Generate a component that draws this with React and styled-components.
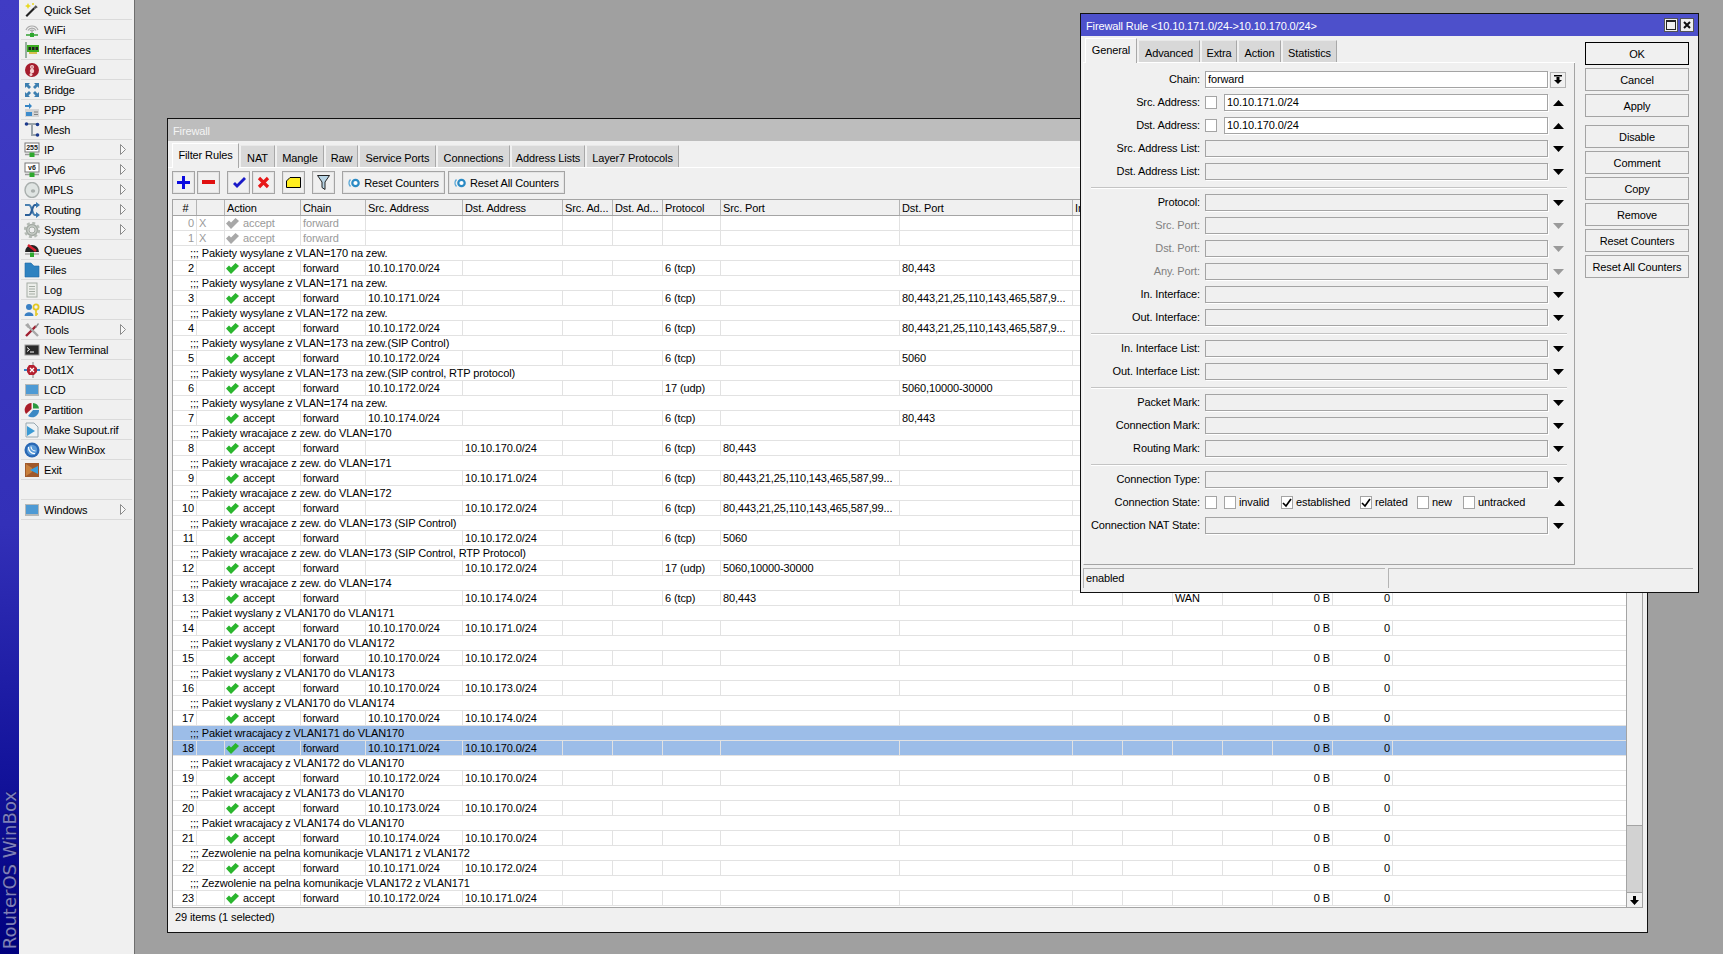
import React from "react";
import styled, { createGlobalStyle } from "styled-components";

const Global = createGlobalStyle`
  html, body {
    margin: 0;
    padding: 0;
    overflow: hidden;
    background: #a0a0a0;
  }
  * {
    box-sizing: border-box;
  }
  body {
    font-family: "Liberation Sans", Arial, sans-serif;
    font-size: 11px;
    letter-spacing: -0.12px;
    color: #000;
  }
`;

const Desktop = styled.div`
  display: flex;
  width: 1723px;
  height: 954px;
  overflow: hidden;
`;

const Strip = styled.div`
  width: 19px;
  flex: none;
  display: flex;
  flex-direction: column;
  justify-content: flex-end;
  align-items: center;
  padding-bottom: 5px;
  background: linear-gradient(180deg, #403cc4 0%, #3330b8 55%, #14149c 80%, #00007e 100%);
`;

const StripText = styled.div`
  writing-mode: vertical-rl;
  transform: rotate(180deg);
  font-family: "DejaVu Sans", sans-serif;
  font-size: 18px;
  letter-spacing: 0;
  line-height: 19px;
  color: #7f80b8;
  text-shadow: 1px 1px 1px #10106a;
  white-space: nowrap;
`;

const Menu = styled.nav`
  width: 116px;
  flex: none;
  background: #f0f0f0;
  border-right: 1px solid #6e6e6e;
`;

const MenuRow = styled.div`
  position: relative;
  height: 20px;
  display: flex;
  align-items: center;
  gap: 4px;
  margin: 0 2px;
  padding: 0 3px;
  border-bottom: 1px solid #dadada;
  font-size: 11px;
  letter-spacing: -0.18px;
  white-space: nowrap;
`;

const MenuIcon = styled.svg`
  width: 16px;
  height: 16px;
  flex: none;
`;

const SubArrow = styled.svg`
  width: 6px;
  height: 11px;
  margin-left: auto;
  margin-right: 3px;
  flex: none;
`;

const Workspace = styled.main`
  position: relative;
  flex: 1;
  background: #a0a0a0;
`;

const Window = styled.section`
  position: absolute;
  left: ${(p) => p.$x}px;
  top: ${(p) => p.$y}px;
  width: ${(p) => p.$w}px;
  height: ${(p) => p.$h}px;
  display: flex;
  flex-direction: column;
  background: #f0f0f0;
  border: 1px solid #111;
  overflow: hidden;
`;

const TitleBar = styled.header`
  height: 22px;
  flex: none;
  display: flex;
  align-items: center;
  padding: 2px 4px 0 5px;
  background: ${(p) => (p.$active ? "#4d50cb" : "#bdbdbd")};
  color: ${(p) => (p.$active ? "#fff" : "#f4f4f4")};
  font-size: 11px;
`;

const TitleButtons = styled.div`
  display: flex;
  gap: 2px;
  margin-left: auto;
  margin-top: -2px;
`;

const TitleBtn = styled.div`
  width: 14px;
  height: 14px;
  display: flex;
  align-items: center;
  justify-content: center;
  background: #f0f0f0;
  border: 1px solid #555;
`;

const Tabs = styled.div`
  height: 27px;
  flex: none;
  display: flex;
  align-items: flex-end;
  gap: 1px;
  padding-left: ${(p) => p.$pad}px;
  border-bottom: 1px solid #fff;
`;

const Tab = styled.div`
  height: ${(p) => (p.$active ? 25 : 22)}px;
  width: ${(p) => p.$w}px;
  flex: none;
  display: flex;
  align-items: center;
  justify-content: center;
  padding-top: ${(p) => (p.$active ? 0 : 2)}px;
  padding-bottom: ${(p) => (p.$active ? 2 : 0)}px;
  background: ${(p) => (p.$active ? "#f0f0f0" : "#d8d8d8")};
  border-top: 1px solid ${(p) => (p.$active ? "#fff" : "#e8e8e8")};
  border-left: 1px solid ${(p) => (p.$active ? "#fff" : "#f0f0f0")};
  border-right: 1px solid #a8a8a8;
  margin-bottom: ${(p) => (p.$active ? -1 : 0)}px;
  white-space: nowrap;
`;

const Toolbar = styled.div`
  height: 31px;
  flex: none;
  display: flex;
  align-items: flex-start;
  padding: 3px 0 0 4px;
`;

const ToolBtn = styled.button`
  height: 23px;
  width: ${(p) => p.$w || 23}px;
  margin-left: ${(p) => p.$gap || 0}px;
  flex: none;
  display: flex;
  align-items: center;
  justify-content: center;
  gap: 4px;
  padding: 0;
  background: #f0f0f0;
  border: 1px solid #a4a4a4;
  outline: 1px solid #e4e4e4;
  outline-offset: -2px;
  font: inherit;
  letter-spacing: inherit;
  color: #000;
`;

const Table = styled.div`
  margin: 0 4px;
  flex: 1;
  display: flex;
  min-height: 0;
  border-right: 1px solid #a4a4a4;
  border-bottom: 1px solid #a4a4a4;
  border-left: 1px solid #a4a4a4;
`;

const TableBody = styled.div`
  flex: 1;
  min-width: 0;
  background: #fff;
  overflow: hidden;
`;

const columns = "24px 28px 76px 65px 97px 100px 50px 50px 58px 179px 173px 50px 50px 50px 50px 60px 60px 1fr";

const HeaderRow = styled.div`
  display: grid;
  grid-template-columns: ${columns};
  height: 17px;
  background: #f0f0f0;
  border-top: 1px solid #a4a4a4;
  border-bottom: 1px solid #a4a4a4;
`;

const HeadCell = styled.div`
  padding-left: 2px;
  line-height: 16px;
  border-right: 1px solid #b4b4b4;
  text-align: ${(p) => (p.$center ? "center" : "left")};
  white-space: nowrap;
  overflow: hidden;
`;

const RuleRow = styled.div`
  display: grid;
  grid-template-columns: ${columns};
  height: 15px;
  line-height: 14px;
  border-bottom: 1px solid #e2e2e2;
  background: ${(p) => (p.$selected ? "#9cbde8" : "#fff")};
  color: ${(p) => (p.$disabled ? "#9a9a9a" : "#000")};
`;

const Cell = styled.div`
  display: flex;
  align-items: center;
  justify-content: ${(p) => (p.$right ? "flex-end" : "flex-start")};
  gap: 4px;
  padding: ${(p) => (p.$right ? "0 2px 0 0" : "0 0 0 2px")};
  border-right: 1px solid #e2e2e2;
  white-space: nowrap;
  overflow: hidden;
`;

const ActionCell = styled(Cell)`
  padding-left: 1px;
`;

const CommentRow = styled.div`
  height: 15px;
  line-height: 14px;
  padding-left: 17px;
  border-bottom: 1px solid #e2e2e2;
  background: ${(p) => (p.$selected ? "#9cbde8" : "#fff")};
  white-space: nowrap;
`;

const Scrollbar = styled.div`
  width: 16px;
  flex: none;
  display: flex;
  flex-direction: column;
  border-left: 1px solid #a4a4a4;
  background: #d2d2d2;
`;

const ScrollThumb = styled.div`
  height: 627px;
  flex: none;
  background: #f0f0f0;
  border-bottom: 1px solid #a4a4a4;
`;

const ScrollArrow = styled.div`
  height: 15px;
  margin-top: auto;
  display: flex;
  align-items: center;
  justify-content: center;
  background: #f0f0f0;
  border-top: 1px solid #a4a4a4;
`;

const StatusBar = styled.footer`
  height: 24px;
  flex: none;
  display: flex;
  align-items: center;
  padding: 0 0 6px 7px;
`;

const DialogBody = styled.div`
  flex: 1;
  display: flex;
  min-height: 0;
`;

const DialogLeft = styled.div`
  width: 492px;
  margin-left: 2px;
  flex: none;
  display: flex;
  flex-direction: column;
`;

const FormPanel = styled.div`
  height: 502px;
  flex: none;
  padding-top: 8px;
  border-right: 1px solid #a4a4a4;
  border-bottom: 1px solid #a4a4a4;
  border-left: 1px solid #f8f8f8;
`;

const FieldRow = styled.div`
  height: 23px;
  display: flex;
  align-items: flex-start;
  color: ${(p) => (p.$dim ? "#808080" : "#000")};
`;

const Label = styled.div`
  width: 121px;
  flex: none;
  padding-right: 5px;
  line-height: 17px;
  text-align: right;
  white-space: nowrap;
`;

const Field = styled.div`
  flex: 1;
  height: 17px;
  min-width: 0;
  margin-left: ${(p) => p.$gap || 0}px;
  padding-left: 2px;
  line-height: 15px;
  color: #000;
  background: ${(p) => (p.$white ? "#fff" : "#f0f0f0")};
  border: 1px solid #a4a4a4;
  box-shadow: 1px 1px 0 #fff;
`;

const FieldEnd = styled.div`
  width: 26px;
  height: 17px;
  flex: none;
  display: flex;
  align-items: center;
  justify-content: center;
  padding-right: 6px;
`;

const ChainBtn = styled.div`
  width: 16px;
  height: 16px;
  display: flex;
  align-items: center;
  justify-content: center;
  background: #f0f0f0;
  border: 1px solid #b4b4b4;
`;

const Separator = styled.div`
  height: 1px;
  margin: 1px 0 6px 7px;
  width: 476px;
  background: #c4c4c4;
  box-shadow: 0 1px 0 #fff;
`;

const Check = styled.div`
  width: 12px;
  height: 13px;
  flex: none;
  margin-top: 2px;
  margin-left: ${(p) => p.$gap || 0}px;
  display: flex;
  align-items: center;
  justify-content: center;
  background: #fff;
  border: 1px solid #a4a4a4;
`;

const CheckLabel = styled.div`
  flex: none;
  width: ${(p) => p.$w}px;
  padding-left: 3px;
  line-height: 17px;
  color: #000;
`;

const DialogStatus = styled.div`
  display: flex;
  gap: 3px;
  height: 20px;
  margin-top: 3px;
  width: 610px;
`;

const StatusCell = styled.div`
  width: ${(p) => p.$w}px;
  padding-left: 2px;
  line-height: 19px;
  border-top: 1px solid #b4b4b4;
  border-left: 1px solid #b4b4b4;
`;

const ButtonColumn = styled.div`
  width: 104px;
  margin-left: 10px;
  padding-top: 6px;
  flex: none;
  display: flex;
  flex-direction: column;
`;

const DialogBtn = styled.button`
  height: 23px;
  margin-bottom: ${(p) => p.$after || 3}px;
  padding: 0;
  flex: none;
  background: #f0f0f0;
  border: 1px solid ${(p) => (p.$primary ? "#000" : "#a4a4a4")};
  font: inherit;
  letter-spacing: inherit;
  color: #000;
`;

const icons = {
  quick: (
    <>
      <path d="M3 15 L1.5 13.5 L9.5 5.5 L11 7 Z" fill="#222" />
      <path d="M9.5 5.5 L12 3 L14 5 L11 7 Z" fill="#555" />
      <path d="M12.5 2.5 L14 4.5" stroke="#eee" strokeWidth="1.5" />
      <path d="M4 1 L5 3 L7 4 L5 5 L4 7 L3 5 L1 4 L3 3 Z" fill="#e8d820" />
      <circle cx="9" cy="2" r="1" fill="#e8d820" />
    </>
  ),
  wifi: (
    <>
      <path d="M2 8 A6.5 6.5 0 0 1 14 8 M4 8.5 A4.5 4.5 0 0 1 12 8.5 M6 9 A2.5 2.5 0 0 1 10 9" fill="none" stroke="#a8a8a8" strokeWidth="1.2" />
      <path d="M8 8 V12" stroke="#aaa" strokeWidth="1.5" />
      <path d="M2 13 H14" stroke="#33a033" strokeWidth="1.5" />
      <rect x="6" y="11" width="4" height="4" fill="#2ea82e" />
    </>
  ),
  interfaces: (
    <>
      <rect x="1" y="0" width="2" height="16" fill="#98b0a0" />
      <rect x="3" y="3" width="12" height="7" fill="#3eae24" />
      <path d="M4.5 5 H7 V8 H4.5 Z M8 5 H10.5 V8 H8 Z M11.5 5 H14 V8 H11.5 Z" fill="#222" />
      <path d="M5 10 H13 V12 H5 Z" fill="#d8c050" />
    </>
  ),
  wireguard: (
    <>
      <circle cx="8" cy="8" r="7" fill="#a51d2d" />
      <circle cx="8" cy="5" r="2" fill="#f4d0d0" />
      <circle cx="8" cy="9" r="2.2" fill="#f4d0d0" />
      <circle cx="7" cy="12.5" r="1.5" fill="#f4d0d0" />
      <circle cx="8" cy="5" r="0.7" fill="#a51d2d" />
    </>
  ),
  bridge: (
    <g fill="#3d7fb0">
      <path d="M1 1 H6 L4.5 2.5 L7 5 L5 7 L2.5 4.5 L1 6 Z" />
      <path d="M15 1 V6 L13.5 4.5 L11 7 L9 5 L11.5 2.5 L10 1 Z" />
      <path d="M1 15 V10 L2.5 11.5 L5 9 L7 11 L4.5 13.5 L6 15 Z" />
      <path d="M15 15 H10 L11.5 13.5 L9 11 L11 9 L13.5 11.5 L15 10 Z" />
    </g>
  ),
  ppp: (
    <>
      <path d="M1 3 H5 V1 L8 4 L5 7 V5 H1 Z" fill="#3484c4" />
      <rect x="1" y="7" width="14" height="8" fill="#d4d4d4" />
      <rect x="2" y="10" width="6" height="4" fill="#3d8ccc" />
      <path d="M10 10 H14 M10 12.5 H14" stroke="#808080" />
    </>
  ),
  mesh: (
    <>
      <path d="M3 2 H13 M8 2 V13 H13" fill="none" stroke="#9aa4aa" strokeWidth="2" />
      <circle cx="2.5" cy="2" r="1.8" fill="#1c3a8c" />
      <circle cx="13.5" cy="2.5" r="1.8" fill="#1c3a8c" />
      <circle cx="13.5" cy="13" r="1.8" fill="#1c3a8c" />
    </>
  ),
  ip: (
    <>
      <rect x="1" y="1" width="14" height="9" fill="#fff" stroke="#777" />
      <text x="8" y="8.4" textAnchor="middle" fontSize="7" fontFamily="Liberation Sans" fontWeight="700" fill="#222" letterSpacing="0">255</text>
      <path d="M1 12.5 H15" stroke="#999" strokeWidth="1.5" />
      <rect x="5.5" y="10.5" width="5" height="4.5" fill="#2ea82e" />
    </>
  ),
  ipv6: (
    <>
      <rect x="1" y="1" width="14" height="9" fill="#fff" stroke="#777" />
      <text x="8" y="8.4" textAnchor="middle" fontSize="7" fontFamily="Liberation Sans" fontWeight="700" fill="#222" letterSpacing="0">v6</text>
      <path d="M1 12.5 H15" stroke="#999" strokeWidth="1.5" />
      <rect x="5.5" y="10.5" width="5" height="4.5" fill="#2ea82e" />
    </>
  ),
  mpls: (
    <>
      <ellipse cx="8" cy="8" rx="7" ry="7.5" fill="#dfe4e2" stroke="#a8aeac" strokeWidth="1.4" />
      <ellipse cx="9" cy="9" rx="2.2" ry="1.8" fill="#a8aeac" />
    </>
  ),
  routing: (
    <>
      <path d="M1 3 H5 C8 3 8 13 11 13 H13" fill="none" stroke="#4a80b0" strokeWidth="2.2" />
      <path d="M1 13 H5 C8 13 8 3 11 3 H13" fill="none" stroke="#2a5e98" strokeWidth="2.2" />
      <path d="M12 0 L16 3 L12 6 Z M12 10 L16 13 L12 16 Z" fill="#3a78b0" />
    </>
  ),
  system: (
    <>
      <circle cx="8" cy="8" r="5.5" fill="#c8cec8" stroke="#a4aaa4" strokeWidth="1.5" />
      <circle cx="8" cy="8" r="7" fill="none" stroke="#b4bab4" strokeWidth="2.4" strokeDasharray="3 2.5" />
      <circle cx="8" cy="8" r="3" fill="#eee" stroke="#a4aaa4" />
    </>
  ),
  queues: (
    <>
      <path d="M1 10 A7 7 0 0 1 15 10 Z" fill="#222" />
      <path d="M4 3 L12 9" stroke="#d82030" strokeWidth="2.4" />
      <path d="M1 12 H15" stroke="#a8a8a8" strokeWidth="1.5" />
      <rect x="6" y="10.5" width="4" height="4.5" fill="#2ea82e" />
    </>
  ),
  files: <path d="M1 1 H7 L10 4 H15 V15 H1 Z" fill="#2e82c0" stroke="#1f6aa4" strokeWidth="0.6" />,
  log: (
    <>
      <rect x="3" y="1" width="10" height="14" fill="#eceeea" stroke="#a4aca4" />
      <path d="M5 4.5 H11 M5 7 H11 M5 9.5 H11 M5 12 H11" stroke="#a4aca4" />
    </>
  ),
  radius: (
    <>
      <circle cx="5" cy="5" r="3" fill="#3a80c4" />
      <path d="M0.5 14 C0.5 9 9.5 9 9.5 14 Z" fill="#3a80c4" />
      <circle cx="12" cy="5" r="2.6" fill="none" stroke="#e4c820" strokeWidth="1.8" />
      <path d="M12 8 V14 M12 12 H14" stroke="#e4c820" strokeWidth="1.6" />
    </>
  ),
  tools: (
    <>
      <path d="M2 14 L12 4" stroke="#a02030" strokeWidth="2.4" />
      <path d="M14 14 L4 4" stroke="#a8a8a8" strokeWidth="2.4" />
      <path d="M1 3 L4 1 L6 4 L4 6 Z" fill="#a8a8a8" />
      <path d="M11 5 L14 1 L15 2 L12 6 Z" fill="#8a8a8a" />
    </>
  ),
  terminal: (
    <>
      <rect x="1" y="3" width="14" height="10" fill="#2a2a2a" stroke="#999" />
      <path d="M3 5.5 L5.5 7.5 L3 9.5 M6 10 H10" fill="none" stroke="#fff" />
    </>
  ),
  dot1x: (
    <>
      <path d="M9 0 V16" stroke="#a8a8a8" strokeWidth="1.5" />
      <path d="M0 8 H16" stroke="#3a80c4" strokeWidth="2" />
      <path d="M5 3 H10 L13 6 V10 L10 13 H5 L3 10 V6 Z" fill="#b42030" />
      <path d="M6 6 L10 10 M10 6 L6 10" stroke="#fff" strokeWidth="1.2" />
    </>
  ),
  lcd: (
    <>
      <rect x="1" y="2" width="14" height="12" fill="#b4b8b8" />
      <rect x="2" y="3" width="12" height="9" fill="#4e9ad4" />
    </>
  ),
  partition: (
    <>
      <path d="M7.5 1 A7 7 0 0 0 2 12 L7.5 7 Z" fill="#a81c28" />
      <path d="M9 1 A6 6 0 0 1 15 6.5 H9 Z" fill="#2a9a40" />
      <path d="M15 8 A7 7 0 0 1 4 14 L9 8 Z" fill="#3a88c4" />
    </>
  ),
  supout: (
    <>
      <path d="M2 1 H10 L14 5 V15 H2 Z" fill="#eef2f4" stroke="#98a8b0" />
      <path d="M3 4 L11 9 L3 14 Z" fill="#3a9ad4" />
    </>
  ),
  newwinbox: (
    <>
      <circle cx="8" cy="8" r="7.5" fill="#2a68b4" />
      <circle cx="8" cy="8" r="5.2" fill="#5a9ad8" />
      <path d="M4.5 5 A6 6 0 0 0 11 11.5 M7 4.5 A4.5 4.5 0 0 0 11.5 9" fill="none" stroke="#fff" strokeWidth="1.2" />
    </>
  ),
  exit: (
    <>
      <rect x="1" y="1" width="14" height="14" fill="#a05a2c" />
      <path d="M2 2 L8 6 V10 L2 14 Z" fill="#c8803c" />
      <path d="M14 4 V12 L6 8 Z" fill="#3aa0e0" />
    </>
  ),
};

const menuItems = [
  ["Quick Set", "quick"],
  ["WiFi", "wifi"],
  ["Interfaces", "interfaces"],
  ["WireGuard", "wireguard"],
  ["Bridge", "bridge"],
  ["PPP", "ppp"],
  ["Mesh", "mesh"],
  ["IP", "ip", true],
  ["IPv6", "ipv6", true],
  ["MPLS", "mpls", true],
  ["Routing", "routing", true],
  ["System", "system", true],
  ["Queues", "queues"],
  ["Files", "files"],
  ["Log", "log"],
  ["RADIUS", "radius"],
  ["Tools", "tools", true],
  ["New Terminal", "terminal"],
  ["Dot1X", "dot1x"],
  ["LCD", "lcd"],
  ["Partition", "partition"],
  ["Make Supout.rif", "supout"],
  ["New WinBox", "newwinbox"],
  ["Exit", "exit"],
  [],
  ["Windows", "lcd", true],
];

const net = (n) => `10.10.${n}.0/24`;
const longPorts = "80,443,21,25,110,143,465,587,9...";
const longPortsIn = "80,443,21,25,110,143,465,587,99...";

const rules = [
  { id: 2, note: "Pakiety wysylane z VLAN=170 na zew.", src: net(170), proto: "6 (tcp)", dport: "80,443" },
  { id: 3, note: "Pakiety wysylane z VLAN=171 na zew.", src: net(171), proto: "6 (tcp)", dport: longPorts },
  { id: 4, note: "Pakiety wysylane z VLAN=172 na zew.", src: net(172), proto: "6 (tcp)", dport: longPorts },
  { id: 5, note: "Pakiety wysylane z VLAN=173 na zew.(SIP Control)", src: net(172), proto: "6 (tcp)", dport: "5060" },
  { id: 6, note: "Pakiety wysylane z VLAN=173 na zew.(SIP control, RTP protocol)", src: net(172), proto: "17 (udp)", dport: "5060,10000-30000" },
  { id: 7, note: "Pakiety wysylane z VLAN=174 na zew.", src: net(174), proto: "6 (tcp)", dport: "80,443" },
  { id: 8, note: "Pakiety wracajace z zew. do VLAN=170", dst: net(170), proto: "6 (tcp)", sport: "80,443" },
  { id: 9, note: "Pakiety wracajace z zew. do VLAN=171", dst: net(171), proto: "6 (tcp)", sport: longPortsIn },
  { id: 10, note: "Pakiety wracajace z zew. do VLAN=172", dst: net(172), proto: "6 (tcp)", sport: longPortsIn },
  { id: 11, note: "Pakiety wracajace z zew. do VLAN=173 (SIP Control)", dst: net(172), proto: "6 (tcp)", sport: "5060" },
  { id: 12, note: "Pakiety wracajace z zew. do VLAN=173 (SIP Control, RTP Protocol)", dst: net(172), proto: "17 (udp)", sport: "5060,10000-30000" },
  { id: 13, note: "Pakiety wracajace z zew. do VLAN=174", dst: net(174), proto: "6 (tcp)", sport: "80,443", out: "WAN" },
  { id: 14, note: "Pakiet wyslany z VLAN170 do VLAN171", src: net(170), dst: net(171) },
  { id: 15, note: "Pakiet wyslany z VLAN170 do VLAN172", src: net(170), dst: net(172) },
  { id: 16, note: "Pakiet wyslany z VLAN170 do VLAN173", src: net(170), dst: net(173) },
  { id: 17, note: "Pakiet wyslany z VLAN170 do VLAN174", src: net(170), dst: net(174) },
  { id: 18, note: "Pakiet wracajacy z VLAN171 do VLAN170", src: net(171), dst: net(170), selected: true },
  { id: 19, note: "Pakiet wracajacy z VLAN172 do VLAN170", src: net(172), dst: net(170) },
  { id: 20, note: "Pakiet wracajacy z VLAN173 do VLAN170", src: net(173), dst: net(170) },
  { id: 21, note: "Pakiet wracajacy z VLAN174 do VLAN170", src: net(174), dst: net(170) },
  { id: 22, note: "Zezwolenie na pelna komunikacje VLAN171 z VLAN172", src: net(171), dst: net(172) },
  { id: 23, note: "Zezwolenie na pelna komunikacje VLAN172 z VLAN171", src: net(172), dst: net(171) },
];

const headers = ["#", "", "Action", "Chain", "Src. Address", "Dst. Address", "Src. Ad...", "Dst. Ad...", "Protocol", "Src. Port", "Dst. Port", "In.", "", "", "", "", "", ""];

const fwTabs = [
  ["Filter Rules", 67, true],
  ["NAT", 35],
  ["Mangle", 48],
  ["Raw", 33],
  ["Service Ports", 77],
  ["Connections", 73],
  ["Address Lists", 74],
  ["Layer7 Protocols", 93],
];

const ruleTabs = [
  ["General", 52, true],
  ["Advanced", 62],
  ["Extra", 36],
  ["Action", 43],
  ["Statistics", 55],
];

function Tick({ gray }) {
  return (
    <svg width="13" height="11" viewBox="0 0 13 11" style={{ flex: "none" }}>
      <path d="M0 5.5 L3 2.5 L5 4.5 L9.5 0 L13 3 L5 11 Z" fill={gray ? "#a8a8a8" : "#2ab62e"} />
    </svg>
  );
}

function Rule({ rule }) {
  const { id, src, dst, proto, sport, dport, out, selected, disabled } = rule;
  const hidden = id > 1 && id < 13;
  return (
    <RuleRow $selected={selected} $disabled={disabled}>
      <Cell $right>{id}</Cell>
      <Cell>{disabled ? "X" : ""}</Cell>
      <ActionCell>
        <Tick gray={disabled} />
        accept
      </ActionCell>
      <Cell>forward</Cell>
      <Cell>{src}</Cell>
      <Cell>{dst}</Cell>
      <Cell />
      <Cell />
      <Cell>{proto}</Cell>
      <Cell>{sport}</Cell>
      <Cell>{dport}</Cell>
      <Cell />
      <Cell />
      <Cell>{out}</Cell>
      <Cell />
      <Cell $right>{id > 1 && !hidden ? "0 B" : ""}</Cell>
      <Cell $right>{id > 1 && !hidden ? "0" : ""}</Cell>
    </RuleRow>
  );
}

function Drop({ up, dim }) {
  return (
    <svg width="11" height="6" viewBox="0 0 11 6">
      <path d={up ? "M0 6 H11 L5.5 0 Z" : "M0 0 H11 L5.5 6 Z"} fill={dim ? "#9a9a9a" : "#000"} />
    </svg>
  );
}

function DropField({ label, dim }) {
  return (
    <FieldRow $dim={dim}>
      <Label>{label}:</Label>
      <Field />
      <FieldEnd>
        <Drop dim={dim} />
      </FieldEnd>
    </FieldRow>
  );
}

function AddressField({ label, value }) {
  return (
    <FieldRow>
      <Label>{label}:</Label>
      <Check />
      <Field $white $gap={7}>{value}</Field>
      <FieldEnd>
        <Drop up />
      </FieldEnd>
    </FieldRow>
  );
}

const Mark = () => (
  <svg width="10" height="10" viewBox="0 0 10 10">
    <path d="M1 5 L4 8 L9 1" fill="none" stroke="#000" strokeWidth="1.7" />
  </svg>
);

function ResetIcon() {
  return (
    <svg width="12" height="10" viewBox="0 0 12 10">
      <circle cx="7.5" cy="5" r="3.2" fill="#fff" stroke="#2a8ac4" strokeWidth="2.2" />
      <path d="M2.5 1.5 A5 5 0 0 0 2.5 8.5" fill="none" stroke="#5aa8d8" strokeWidth="1.5" />
    </svg>
  );
}

function FirewallWindow() {
  return (
    <Window $x={32} $y={118} $w={1481} $h={815}>
      <TitleBar>Firewall</TitleBar>
      <Tabs $pad={4}>
        {fwTabs.map(([name, w, active]) => (
          <Tab key={name} $w={w} $active={active}>{name}</Tab>
        ))}
      </Tabs>
      <Toolbar>
        <ToolBtn>
          <svg width="13" height="13" viewBox="0 0 13 13"><path d="M5 0 H8 V5 H13 V8 H8 V13 H5 V8 H0 V5 H5 Z" fill="#0a0ae0" /></svg>
        </ToolBtn>
        <ToolBtn $gap={2}>
          <svg width="13" height="5" viewBox="0 0 13 5"><rect width="13" height="4" fill="#e01010" /></svg>
        </ToolBtn>
        <ToolBtn $gap={7}>
          <svg width="14" height="12" viewBox="0 0 14 12"><path d="M1 7 L3 5 L5 7 L12 0 L14 2 L5 11 Z" fill="#1a1ac8" /></svg>
        </ToolBtn>
        <ToolBtn $gap={2}>
          <svg width="13" height="13" viewBox="0 0 13 13"><path d="M2 2 L11 11 M11 2 L2 11" stroke="#e81818" strokeWidth="3.2" /></svg>
        </ToolBtn>
        <ToolBtn $gap={7}>
          <svg width="15" height="11" viewBox="0 0 15 11"><path d="M4 0.5 H14.5 V10.5 H0.5 V4 Z" fill="#ffee20" stroke="#000" /></svg>
        </ToolBtn>
        <ToolBtn $gap={7}>
          <svg width="13" height="15" viewBox="0 0 13 15"><path d="M0.5 0.5 H12.5 L8 7 V14.5 L5 12.5 V7 Z" fill="#b8d4e4" stroke="#222" /></svg>
        </ToolBtn>
        <ToolBtn $gap={7} $w={103}>
          <ResetIcon />
          Reset Counters
        </ToolBtn>
        <ToolBtn $gap={3} $w={117}>
          <ResetIcon />
          Reset All Counters
        </ToolBtn>
      </Toolbar>
      <Table>
        <TableBody>
          <HeaderRow>
            {headers.map((h, i) => (
              <HeadCell key={i} $center={i === 0}>{h}</HeadCell>
            ))}
          </HeaderRow>
          <Rule rule={{ id: 0, disabled: true }} />
          <Rule rule={{ id: 1, disabled: true }} />
          {rules.map((r) => (
            <React.Fragment key={r.id}>
              <CommentRow $selected={r.selected}>;;; {r.note}</CommentRow>
              <Rule rule={r} />
            </React.Fragment>
          ))}
        </TableBody>
        <Scrollbar>
          <ScrollThumb />
          <ScrollArrow>
            <svg width="9" height="9" viewBox="0 0 9 9"><path d="M3 0 H6 V4 H9 L4.5 9 L0 4 H3 Z" fill="#000" /></svg>
          </ScrollArrow>
        </Scrollbar>
      </Table>
      <StatusBar>29 items (1 selected)</StatusBar>
    </Window>
  );
}

function RuleDialog() {
  return (
    <Window $x={945} $y={13} $w={619} $h={580}>
      <TitleBar $active>
        {"Firewall Rule <10.10.171.0/24->10.10.170.0/24>"}
        <TitleButtons>
          <TitleBtn>
            <svg width="10" height="10" viewBox="0 0 10 10"><rect x="0.5" y="0.5" width="9" height="9" fill="none" stroke="#222" /><path d="M0 1 H10" stroke="#222" strokeWidth="2" /></svg>
          </TitleBtn>
          <TitleBtn>
            <svg width="8" height="8" viewBox="0 0 8 8"><path d="M1 1 L7 7 M7 1 L1 7" stroke="#111" strokeWidth="2" /></svg>
          </TitleBtn>
        </TitleButtons>
      </TitleBar>
      <DialogBody>
        <DialogLeft>
          <Tabs $pad={2}>
            {ruleTabs.map(([name, w, active]) => (
              <Tab key={name} $w={w} $active={active}>{name}</Tab>
            ))}
          </Tabs>
          <FormPanel>
            <FieldRow>
              <Label>Chain:</Label>
              <Field $white>forward</Field>
              <FieldEnd>
                <ChainBtn>
                  <svg width="8" height="9" viewBox="0 0 8 9"><path d="M0 0 H8 V1.5 H0 Z M2.5 2 H5.5 V5 H8 L4 9 L0 5 H2.5 Z" fill="#000" /></svg>
                </ChainBtn>
              </FieldEnd>
            </FieldRow>
            <AddressField label="Src. Address" value="10.10.171.0/24" />
            <AddressField label="Dst. Address" value="10.10.170.0/24" />
            <DropField label="Src. Address List" />
            <DropField label="Dst. Address List" />
            <Separator />
            <DropField label="Protocol" />
            <DropField label="Src. Port" dim />
            <DropField label="Dst. Port" dim />
            <DropField label="Any. Port" dim />
            <DropField label="In. Interface" />
            <DropField label="Out. Interface" />
            <Separator />
            <DropField label="In. Interface List" />
            <DropField label="Out. Interface List" />
            <Separator />
            <DropField label="Packet Mark" />
            <DropField label="Connection Mark" />
            <DropField label="Routing Mark" />
            <Separator />
            <DropField label="Connection Type" />
            <FieldRow>
              <Label>Connection State:</Label>
              <Check />
              <Check $gap={7} />
              <CheckLabel $w={45}>invalid</CheckLabel>
              <Check><Mark /></Check>
              <CheckLabel $w={67}>established</CheckLabel>
              <Check><Mark /></Check>
              <CheckLabel $w={45}>related</CheckLabel>
              <Check />
              <CheckLabel $w={34}>new</CheckLabel>
              <Check />
              <CheckLabel $w={74}>untracked</CheckLabel>
              <FieldEnd>
                <Drop up />
              </FieldEnd>
            </FieldRow>
            <DropField label="Connection NAT State" />
          </FormPanel>
          <DialogStatus>
            <StatusCell $w={302}>enabled</StatusCell>
            <StatusCell $w={305} />
          </DialogStatus>
        </DialogLeft>
        <ButtonColumn>
          <DialogBtn $primary>OK</DialogBtn>
          <DialogBtn>Cancel</DialogBtn>
          <DialogBtn $after={8}>Apply</DialogBtn>
          <DialogBtn>Disable</DialogBtn>
          <DialogBtn>Comment</DialogBtn>
          <DialogBtn>Copy</DialogBtn>
          <DialogBtn>Remove</DialogBtn>
          <DialogBtn>Reset Counters</DialogBtn>
          <DialogBtn>Reset All Counters</DialogBtn>
        </ButtonColumn>
      </DialogBody>
    </Window>
  );
}

export default function App() {
  return (
    <>
      <Global />
      <Desktop>
        <Strip>
          <StripText>RouterOS WinBox</StripText>
        </Strip>
        <Menu>
          {menuItems.map(([name, icon, sub], i) => (
            <MenuRow key={i}>
              {icon && <MenuIcon viewBox="0 0 16 16">{icons[icon]}</MenuIcon>}
              {name}
              {sub && (
                <SubArrow viewBox="0 0 6 11">
                  <path d="M0.5 0.5 L5.5 5.5 L0.5 10.5 Z" fill="#f8f8f8" stroke="#8c8c8c" />
                </SubArrow>
              )}
            </MenuRow>
          ))}
        </Menu>
        <Workspace>
          <FirewallWindow />
          <RuleDialog />
        </Workspace>
      </Desktop>
    </>
  );
}
